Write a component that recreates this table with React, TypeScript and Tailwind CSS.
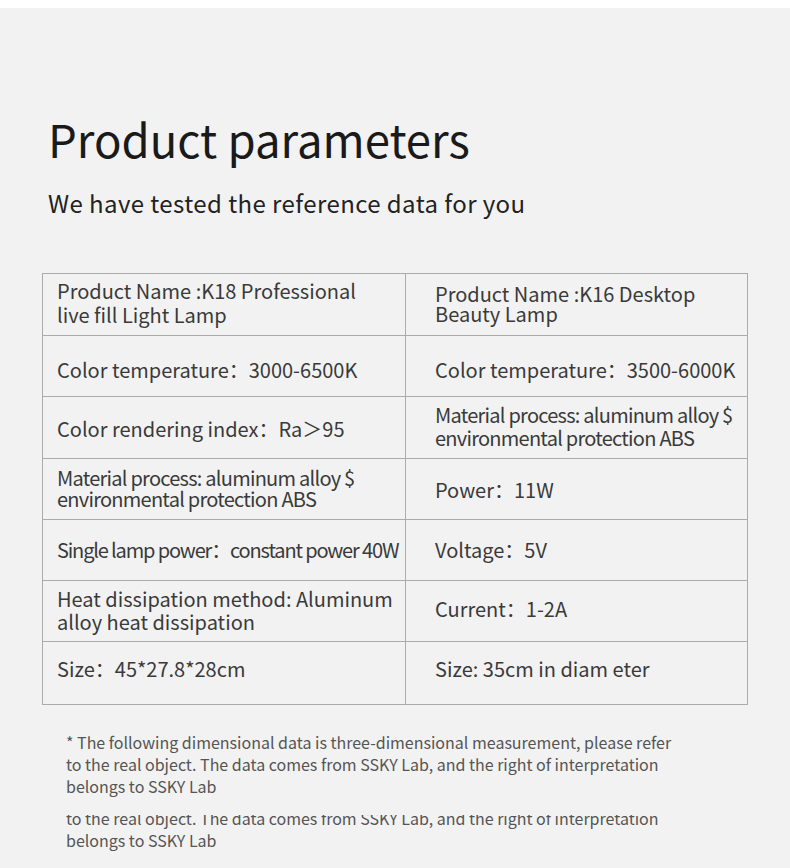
import React from "react";

const FONT = { fontFamily: '"Noto Sans CJK SC", "Noto Sans", sans-serif' };

type Cell = { text: React.ReactNode; cls: string };

const rows: { h: string; left: Cell; right: Cell }[] = [
  {
    h: "h-[62px]",
    left: { text: <>Product Name :K18 Professional<br />live fill Light Lamp</>, cls: "leading-[24px] pb-[4px]" },
    right: { text: <>Product Name :K16 Desktop<br />Beauty Lamp</>, cls: "leading-[20px] pb-[2px]" },
  },
  {
    h: "h-[61px]",
    left: { text: "Color temperature：3000-6500K", cls: "leading-[24px] pt-[7px]" },
    right: { text: "Color temperature：3500-6000K", cls: "leading-[24px] pt-[7px]" },
  },
  {
    h: "h-[62px]",
    left: { text: "Color rendering index：Ra＞95", cls: "leading-[24px] pt-[3px]" },
    right: { text: <>Material process: aluminum alloy $<br />environmental protection ABS</>, cls: "leading-[23px] pb-[4px] tracking-[-0.75px]" },
  },
  {
    h: "h-[61px]",
    left: { text: <>Material process: aluminum alloy $<br />environmental protection ABS</>, cls: "leading-[21px] tracking-[-0.75px] pb-[3px]" },
    right: { text: "Power：11W", cls: "leading-[24px] pt-[2px]" },
  },
  {
    h: "h-[61px]",
    left: { text: "Single lamp power：constant power 40W", cls: "leading-[24px] tracking-[-1.15px] pb-[1px]" },
    right: { text: "Voltage：5V", cls: "leading-[24px] pb-[1px]" },
  },
  {
    h: "h-[61px]",
    left: { text: <>Heat dissipation method: Aluminum<br />alloy heat dissipation</>, cls: "leading-[23px] pb-[2px]" },
    right: { text: "Current：1-2A", cls: "leading-[24px] pb-[4px]" },
  },
  {
    h: "h-[62px]",
    left: { text: "Size：45*27.8*28cm", cls: "leading-[24px] pb-[8px]" },
    right: { text: "Size: 35cm in diam eter", cls: "leading-[24px] pb-[8px]" },
  },
];

const FOOT = (
  <>
    * The following dimensional data is three-dimensional measurement, please refer
    <br />
    to the real object. The data comes from SSKY Lab, and the right of interpretation
    <br />
    belongs to SSKY Lab
  </>
);

export default function App() {
  return (
    <div className="w-[790px] h-[868px] overflow-hidden bg-[#f2f2f2]" style={FONT}>
      <div className="h-[8px] bg-white" />
      <div className="pl-[48px] pt-[108px]">
        <h1 className="text-[45.5px] leading-[45px] text-[#1a1a1a] font-normal">Product parameters</h1>
        <p className="mt-[27px] text-[24px] leading-[30px] tracking-[0.42px] text-[#222]">We have tested the reference data for you</p>
      </div>
      <div className="ml-[42px] mt-[55px] w-[706px] border border-[#ababab]">
        {rows.map((r, i) => (
          <div
            key={i}
            className={`flex ${r.h} ${i < rows.length - 1 ? "border-b border-[#ababab]" : ""}`}
          >
            <div className="w-[363px] shrink-0 border-r border-[#ababab] pl-[14px] flex items-center text-[20px] text-[#3a3a3a] whitespace-nowrap">
              <div className={r.left.cls}>{r.left.text}</div>
            </div>
            <div className="flex-1 pl-[29px] flex items-center text-[20px] text-[#3a3a3a] whitespace-nowrap">
              <div className={r.right.cls}>{r.right.text}</div>
            </div>
          </div>
        ))}
      </div>
      <div className="pl-[66px] mt-[26px] text-[16px] leading-[22px] text-[#555]">
        <p>{FOOT}</p>
        <div className="mt-[18px] h-[60px] overflow-hidden">
          <p className="-mt-[30px]">{FOOT}</p>
        </div>
      </div>
    </div>
  );
}
